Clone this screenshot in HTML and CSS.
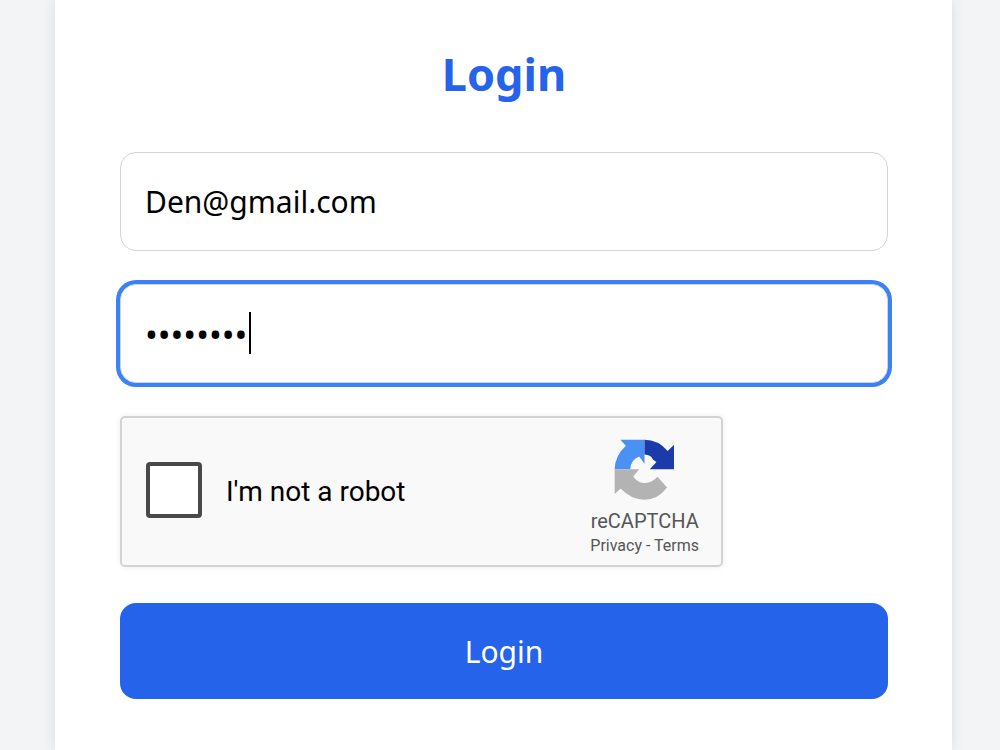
FILE: index.html
```html
<!DOCTYPE html>
<html lang="en">

<head>
    <meta charset="UTF-8">
    <meta name="viewport" content="width=device-width, initial-scale=1.0">
    <title>Login</title>
    <link rel="stylesheet" href="styles.css">
</head>

<body>
    <main class="login-card">
        <h1>Login</h1>
        <form class="login-form">
            <input type="email" id="email" name="email" value="Den@gmail.com" aria-label="Email">
            <div class="password-field">
                <input type="password" id="password" name="password" value="password" aria-label="Password" autofocus>
                <span class="caret"></span>
            </div>

            <div class="captcha">
                <input type="checkbox" id="robot" name="robot">
                <label for="robot">I'm not a robot</label>
                <div class="captcha-brand">
                    <svg class="captcha-logo" viewBox="130 88 182 184" aria-hidden="true">
                        <path fill="#4a90f5" d="M148 90H221V163L205 141Q180 150 178 179H131Q132 137 165 108Z" />
                        <path fill="#1c3aa9" d="M221 90Q262 90 291 124L310 105V179H237L257 157L246 150Q242 136 221 135Z" />
                        <path fill="#b3b3b3" d="M131 179H205L187 201Q200 221 222 221Q245 220 260 202L289 234Q262 270 221 271Q180 270 149 237L131 254Z" />
                    </svg>
                    <div class="captcha-name">reCAPTCHA</div>
                    <div class="captcha-links"><a href="#">Privacy</a> - <a href="#">Terms</a></div>
                </div>
            </div>

            <button type="submit">Login</button>
        </form>
    </main>
</body>

</html>
```
FILE: styles.css
```css
* {
    margin: 0;
    padding: 0;
    box-sizing: border-box;
}

body {
    font-family: "Noto Sans", "Open Sans", sans-serif;
    background-color: #f3f4f6;
    color: #000;
    padding: 0 48px 0 55px;
}

.login-card {
    background-color: #fff;
    min-height: 100vh;
    padding: 44px 64px 48px 65px;
    box-shadow: 0 0 12px rgba(0, 0, 0, 0.1);
}

.login-card h1 {
    color: #2563eb;
    font-size: 45px;
    line-height: 60px;
    text-align: center;
    margin-bottom: 48px;
}

.login-form input[type="email"],
.login-form input[type="password"] {
    display: block;
    width: 100%;
    height: 99px;
    padding: 0 24px;
    border: 1px solid #d1d5db;
    border-radius: 16px;
    background-color: #fff;
    color: #000;
    font-family: inherit;
    font-size: 30px;
    outline: none;
}

.login-form input[type="password"] {
    box-shadow: 0 0 0 4px #3b82f6;
    font-size: 34px;
    caret-color: transparent;
}

.password-field {
    position: relative;
    margin: 33px 0;
}

/* text cursor after the last character */
.caret {
    position: absolute;
    left: 129px;
    top: 28px;
    width: 2px;
    height: 42px;
    background-color: #000;
}

.captcha {
    display: flex;
    align-items: center;
    width: 603px;
    max-width: 100%;
    height: 151px;
    padding: 0 22px 0 24px;
    border: 2px solid #d3d3d3;
    border-radius: 5px;
    background-color: #f9f9f9;
    box-shadow: 0 0 6px rgba(0, 0, 0, 0.08);
    font-family: Roboto, sans-serif;
}

.captcha input {
    appearance: none;
    width: 56px;
    height: 56px;
    margin: 0 24px 4px 0;
    border: 4px solid #474a49;
    border-radius: 4px;
    background-color: #fff;
}

.captcha label {
    flex: 1;
    font-size: 28px;
}

.captcha-brand {
    color: #555;
    text-align: center;
}

.captcha-logo {
    display: block;
    width: 61px;
    height: 61px;
    margin: 14px auto 8px;
}

.captcha-name {
    font-size: 20px;
    line-height: 26px;
}

.captcha-links {
    font-size: 16px;
    line-height: 24px;
}

.captcha-links a {
    color: inherit;
    text-decoration: none;
}

.login-form button {
    width: 100%;
    height: 96px;
    margin-top: 36px;
    border: none;
    border-radius: 16px;
    background-color: #2563eb;
    color: #fff;
    font-family: inherit;
    font-size: 30px;
    cursor: pointer;
}
```
